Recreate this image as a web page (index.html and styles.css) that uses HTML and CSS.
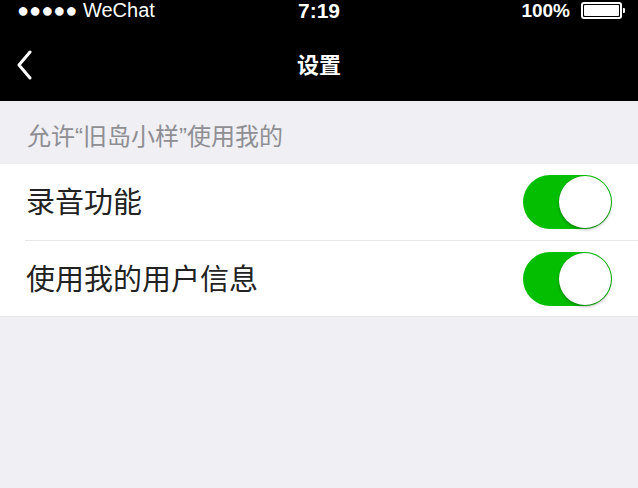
FILE: index.html
```html
<!DOCTYPE html>
<html lang="zh-CN">
<head>
<meta charset="utf-8">
<title>设置</title>
<link rel="stylesheet" href="styles.css">
</head>
<body>
<div class="screen">
  <div class="status">
    <div class="status-left">●●●●● WeChat</div>
    <div class="status-time">7:19</div>
    <div class="status-right">
      <span class="pct">100%</span>
      <span class="battery"><span class="battery-fill"></span></span>
      <span class="battery-nub"></span>
    </div>
  </div>
  <div class="nav">
    <div class="back">
      <svg width="20" height="30" viewBox="0 0 20 30"><path d="M15 2 L4 15 L15 28" fill="none" stroke="#fff" stroke-width="3" stroke-linecap="round" stroke-linejoin="round"/></svg>
    </div>
    <div class="title">设置</div>
    <div class="nav-spacer"></div>
  </div>
  <div class="section-head">允许“旧岛小样”使用我的</div>
  <div class="list">
    <div class="row">
      <span class="label">录音功能</span>
      <span class="switch"><span class="knob"></span></span>
    </div>
    <div class="row">
      <span class="label">使用我的用户信息</span>
      <span class="switch"><span class="knob"></span></span>
    </div>
  </div>
</div>
</body>
</html>
```
FILE: styles.css
```css
html, body {
  margin: 0;
  padding: 0;
}
body {
  width: 638px;
  height: 488px;
  background: #efeff4;
  font-family: "Noto Sans CJK SC", "Liberation Sans", sans-serif;
  overflow: hidden;
}
.screen {
  display: flex;
  flex-direction: column;
}
.status {
  background: #000;
  color: #fff;
  height: 24px;
  display: flex;
  align-items: center;
  justify-content: space-between;
  padding: 0 13px 0 17px;
  font-family: "Liberation Sans", "Noto Sans", sans-serif;
  font-size: 20px;
  position: relative;
}
.status-left {
  margin-top: -3px;
}
.status-time {
  position: absolute;
  left: 0;
  right: 0;
  top: -1px;
  text-align: center;
  font-weight: bold;
  font-size: 21px;
}
.status-right {
  display: flex;
  align-items: center;
  margin-top: -3px;
}
.pct {
  font-weight: bold;
  font-size: 19px;
  margin-right: 11px;
}
.battery {
  width: 35px;
  height: 11px;
  border: 2px solid #fff;
  border-radius: 3px;
  padding: 1px;
  display: flex;
}
.battery-fill {
  flex: 1;
  background: #fff;
  border-radius: 1px;
}
.battery-nub {
  width: 2px;
  height: 5px;
  background: #fff;
  margin-left: 1px;
  border-radius: 0 1px 1px 0;
}
.nav {
  background: #000;
  height: 77px;
  display: flex;
  align-items: center;
  justify-content: space-between;
  color: #fff;
}
.back {
  width: 60px;
  padding-left: 15px;
  display: flex;
  align-items: center;
  margin-top: 4px;
}
.nav-spacer {
  width: 75px;
}
.title {
  font-size: 22px;
  font-weight: bold;
}
.section-head {
  height: 63px;
  box-sizing: border-box;
  padding: 21px 0 0 27px;
  color: #8e8e93;
  font-family: "Liberation Sans", "Noto Sans CJK SC", sans-serif;
  font-size: 24px;
  line-height: 30px;
}
.list {
  background: #fff;
  border-bottom: 1px solid #e4e4e7;
}
.row {
  height: 75px;
  display: flex;
  align-items: center;
  justify-content: space-between;
  padding: 0 26px 0 26px;
  position: relative;
}
.row:first-child {
  height: 76px;
}
.row + .row {
  border-top: 1px solid #e8e8ea;
}
.row + .row::before {
  content: "";
  position: absolute;
  top: -1px;
  left: 0;
  width: 25px;
  height: 1px;
  background: #fff;
}
.label {
  font-size: 29px;
  color: #222;
  line-height: 40px;
  margin-top: -4px;
}
.switch {
  width: 89px;
  height: 54px;
  border-radius: 27px;
  background: #04be02;
  display: flex;
  justify-content: flex-end;
  align-items: center;
  box-sizing: border-box;
  padding-right: 1px;
}
.knob {
  width: 52px;
  height: 52px;
  border-radius: 50%;
  background: #fff;
  box-shadow: 0 2px 3px rgba(0,0,0,0.25), 0 0 1px rgba(0,0,0,0.2);
}
```
